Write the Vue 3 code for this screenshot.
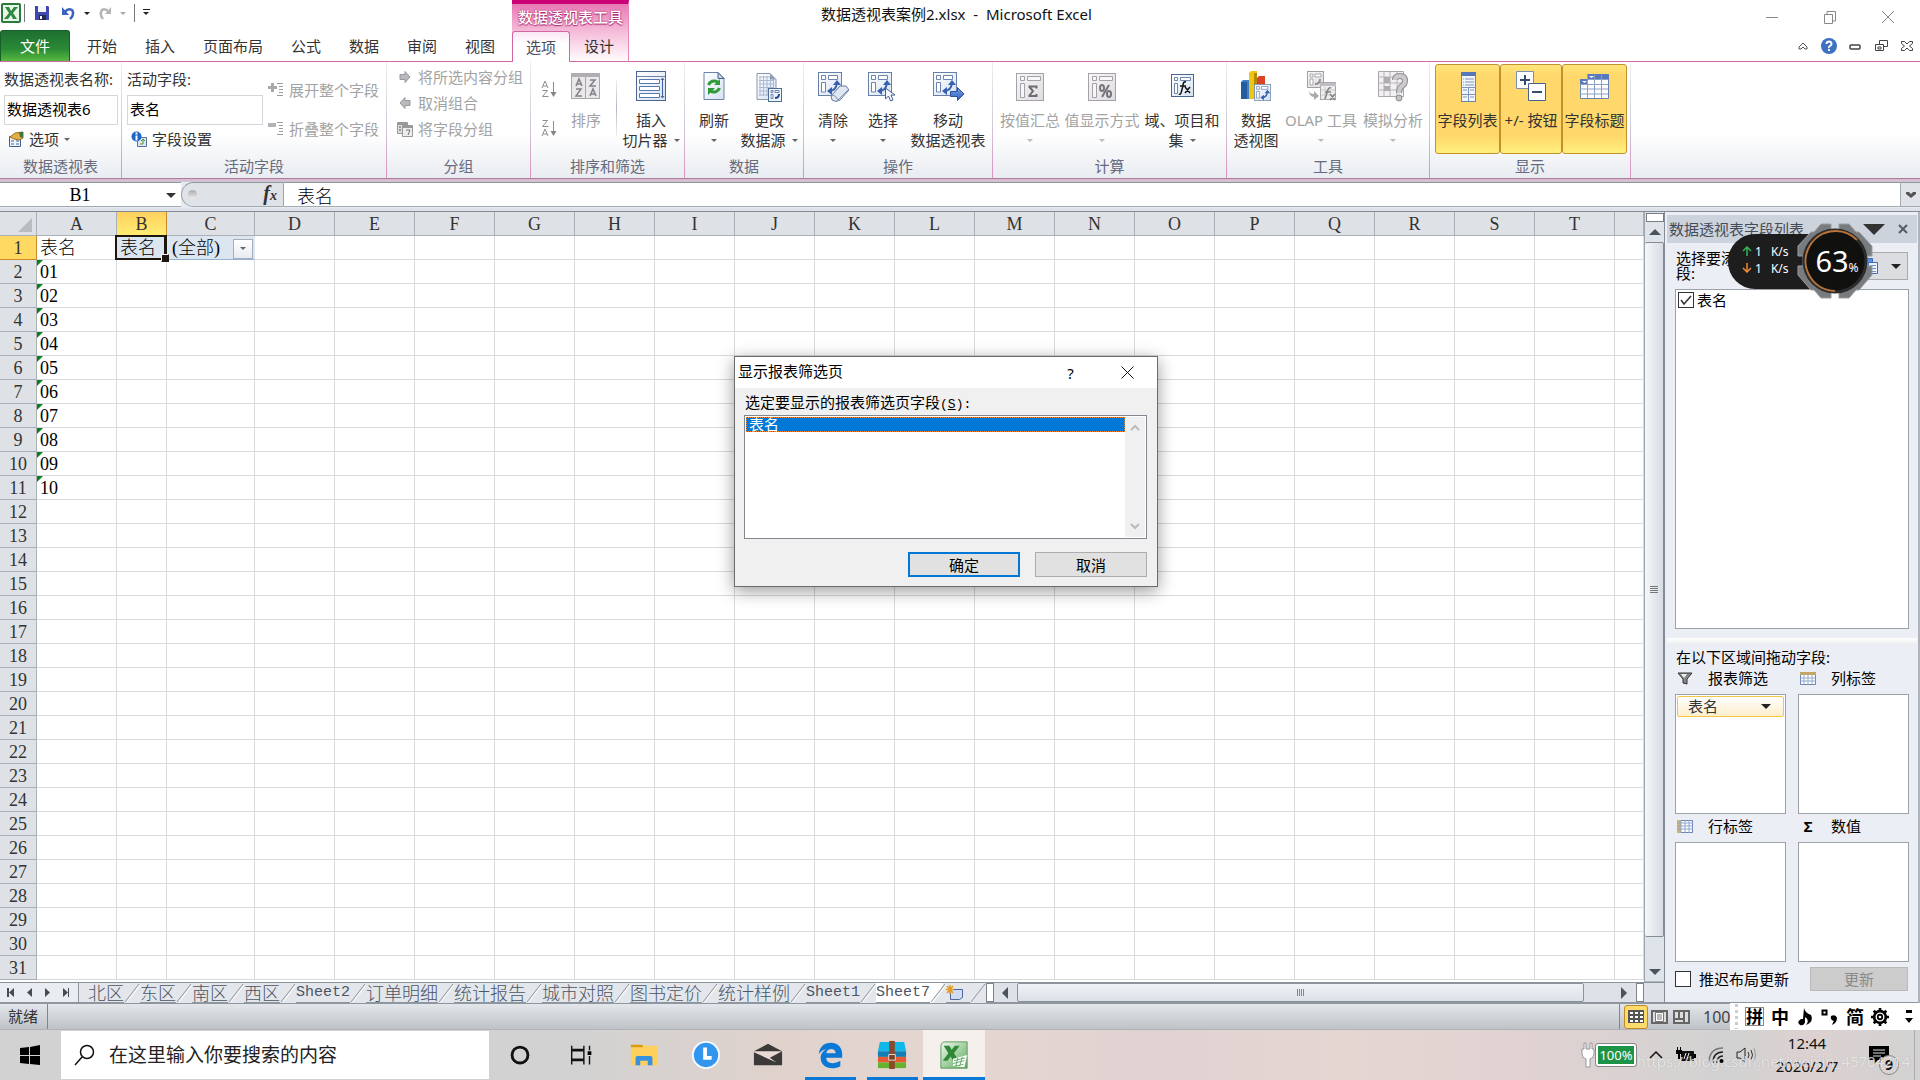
<script setup>
import { ref } from 'vue'

const tabs = ['开始', '插入', '页面布局', '公式', '数据', '审阅', '视图']

const bigGroups = [
  {
    name: '数据', width: 119, pad: 3,
    items: [
      { w: 52, icon: 'refresh', l1: '刷新', l2: '', arrow: true },
      { w: 58, icon: 'source', l1: '更改', l2: '数据源', arrow: true }
    ]
  },
  {
    name: '操作', width: 189, pad: 4,
    items: [
      { w: 50, icon: 'clear', l1: '清除', l2: '', arrow: true },
      { w: 50, icon: 'select', l1: '选择', l2: '', arrow: true },
      { w: 80, icon: 'move', l1: '移动', l2: '数据透视表', arrow: false }
    ]
  },
  {
    name: '计算', width: 234, pad: 3,
    items: [
      { w: 68, icon: 'sum', l1: '按值汇总', l2: '', arrow: true, off: true },
      { w: 76, icon: 'percent', l1: '值显示方式', l2: '', arrow: true, off: true },
      { w: 84, icon: 'fxset', l1: '域、项目和', l2: '集', arrow: true }
    ]
  },
  {
    name: '工具', width: 203, pad: 3,
    items: [
      { w: 52, icon: 'chart', l1: '数据', l2: '透视图', arrow: false },
      { w: 78, icon: 'olap', l1: 'OLAP 工具', l2: '', arrow: true, off: true },
      { w: 66, icon: 'whatif', l1: '模拟分析', l2: '', arrow: true, off: true }
    ]
  },
  {
    name: '显示', width: 201, pad: 5,
    items: [
      { w: 65, icon: 'fieldlist', l1: '字段列表', l2: '', on: true },
      { w: 62, icon: 'plusminus', l1: '+/- 按钮', l2: '', on: true },
      { w: 65, icon: 'headers', l1: '字段标题', l2: '', on: true }
    ]
  }
]

const cols = 'ABCDEFGHIJKLMNOPQRST'.split('')
const colWidth = { A: 80, B: 50, C: 88 }
const rows = Array.from({ length: 31 }, (_, i) => i + 1)
const cellA = (r) => (r === 1 ? '表名' : r <= 11 ? String(r - 1).padStart(2, '0') : '')

const sheets = ['北区', '东区', '南区', '西区', 'Sheet2', '订单明细', '统计报告', '城市对照', '图书定价', '统计样例', 'Sheet1', 'Sheet7']
const active = ref('Sheet7')

const apps = [
  { id: 'cortana', name: 'Cortana' },
  { id: 'taskview', name: '任务视图' },
  { id: 'folder', name: '文件资源管理器' },
  { id: 'clockapp', name: '时钟' },
  { id: 'mail', name: '邮件' },
  { id: 'edge', name: 'Edge', open: true },
  { id: 'rar', name: '压缩', open: true },
  { id: 'excelbig', name: 'Excel', open: true, current: true }
]

const pivotName = ref('数据透视表6')
const fieldName = ref('表名')
const cellRef = ref('B1')
const formula = ref('表名')
const search = ref('')
const picked = ref(true)
const defer = ref(false)
</script>

<template>
  <div class="page">
    <svg class="sprite" aria-hidden="true">
      <defs>
        <linearGradient id="gdoc" x1="0" y1="0" x2="1" y2="1"><stop offset="0" stop-color="#fff" /><stop offset="1" stop-color="#d5e2f2" /></linearGradient>
        <linearGradient id="ggrey" x1="0" y1="0" x2="1" y2="1"><stop offset="0" stop-color="#f8f7f9" /><stop offset="1" stop-color="#dedce0" /></linearGradient>
        <linearGradient id="gblue" x1="0" y1="0" x2="0" y2="1"><stop offset="0" stop-color="#7aa2ea" /><stop offset="1" stop-color="#2f5fbd" /></linearGradient>
        <linearGradient id="gx" x1="0" y1="0" x2="1" y2="1"><stop offset="0" stop-color="#f0f8ee" /><stop offset="1" stop-color="#5cab5b" /></linearGradient>
      </defs>
      <symbol id="pivot" viewBox="0 0 24 24">
        <rect x=".5" y=".5" width="23" height="23" fill="url(#gdoc)" stroke="#6780a8" />
        <path d="M3.5 3.5h4v4h-4zM10.500 3.500h9v4h-9zM3.500 10.500h4v9.500h-4z" fill="#fff" stroke="#6d84b0" />
        <path d="M11 19q7 0 8-8" fill="none" stroke="#355fb0" stroke-width="2" />
        <path d="M9 19l5-4v8zM19 8l-4 5h8z" fill="#355fb0" />
      </symbol>
      <symbol id="refresh" viewBox="0 0 32 32">
        <path d="M6 2.500h14l6 6v21H6z" fill="url(#gdoc)" stroke="#6a83a6" /><path d="M20 2.500v6h6z" fill="#c8d6ea" stroke="#4a6490" />
        <path d="M10.500 15a6 6 0 0 1 9-3M21.500 18a6 6 0 0 1-9 3" fill="none" stroke="#2f9a38" stroke-width="3" /><path d="M22 9v6h-6zM10 25v-7h7z" fill="#2f9a38" />
      </symbol>
      <symbol id="source" viewBox="0 0 32 32">
        <path d="M4 3.500h13l6 6v20H4z" fill="url(#gdoc)" stroke="#8797b0" /><path d="M7 6v20M10.500 6v20M14 6v20M17.500 9v17M20.500 9v17M6 7h11M6 10.500h15M6 14h15M6 17.500h15M6 21h15M6 25h15" stroke="#a9b9d0" />
        <path d="M17 3.500v6h6z" fill="#8d9db6" /><rect x="15.500" y="18.500" width="13" height="13" fill="#eef4fb" stroke="#4f6c94" /><path d="M18 20.500h2v2h-2zM22 20.500h4v2h-4zM18 24.500h2v4h-2z" fill="#fff" stroke="#6d84b0" /><path d="M22 28q4 0 4-4" fill="none" stroke="#224f94" stroke-width="2" />
      </symbol>
      <symbol id="clear" viewBox="0 0 32 32">
        <use href="#pivot" x="1" y="2" width="24" height="24" /><path d="M14 26l9-10 6 0 3 4-9 10q-4 3-8 0z" fill="#dfe7f3" stroke="#66799a" /><path d="M15 25q4 0 6 5l10-10" fill="none" stroke="#8191ae" />
      </symbol>
      <symbol id="select" viewBox="0 0 32 32">
        <use href="#pivot" x="1" y="2" width="24" height="24" /><path d="M18.500 18v11l3-3 2 5 2.500-1-2-5h4z" fill="#f5f9ff" stroke="#45618c" />
      </symbol>
      <symbol id="move" viewBox="0 0 32 32">
        <use href="#pivot" x="1" y="2" width="24" height="24" /><path d="M18.500 21.500h7v-4l6.500 6.500-6.500 6.500v-4h-7z" fill="url(#gblue)" stroke="#2c529c" />
      </symbol>
      <symbol id="greybox" viewBox="0 0 32 32">
        <rect x="2.500" y="3.500" width="27" height="27" fill="url(#ggrey)" stroke="#a5a1a7" /><path d="M6.500 6.500h4v4h-4zM13.500 6.500h13v4h-13zM6.500 13.500h4v14h-4z" fill="#f7f6f8" stroke="#a5a1a7" />
      </symbol>
      <symbol id="sum" viewBox="0 0 32 32"><use href="#greybox" /><path d="M14.500 16.500h8v2M15 16.500l4 4.500-4 5M14.500 26h8v-2" fill="none" stroke="#6f6b72" stroke-width="2" /></symbol>
      <symbol id="percent" viewBox="0 0 32 32"><use href="#greybox" /><g fill="none" stroke="#77737a" stroke-width="2"><ellipse cx="16" cy="18" rx="2" ry="3" /><ellipse cx="23" cy="24" rx="2" ry="3" /><path d="M23 15l-7 12" /></g></symbol>
      <symbol id="fxset" viewBox="0 0 32 32"><rect x="5.500" y="4.500" width="22" height="22" fill="url(#gdoc)" stroke="#48658e" /><path d="M8.500 7.500h3v3h-3zM14.500 7.500h10v3h-10zM8.500 13.500h3v10h-3z" fill="#fff" stroke="#6d84b0" /><path d="M20 12q-3-1-3 4l-2 7q-1 2-2 1M14 16h6M19 17l5 6M24 17l-5 6" fill="none" stroke="#111" stroke-width="1.500" /></symbol>
      <symbol id="chart" viewBox="0 0 32 32">
        <path d="M1 12l2-2h6v19H1z" fill="#3d80c5" /><path d="M1 12h6v17H1z" fill="#235d9e" /><path d="M9 3l2-2h6v28H9z" fill="#f0c614" /><path d="M14 3h3v26h-3z" fill="#b48a08" /><path d="M17 8l2-2h6v9h-8z" fill="#d94425" />
        <use href="#pivot" x="14" y="14" width="17" height="17" />
      </symbol>
      <symbol id="olap" viewBox="0 0 32 32"><rect x="2.500" y="1.500" width="16" height="16" fill="url(#ggrey)" stroke="#a29ea4" /><path d="M5 4h3v3H5zM10 4h6v3h-6zM5 9h3v6H5z" fill="#fff" stroke="#aaa6ac" /><path d="M10 14q5 0 5-5" fill="none" stroke="#929095" stroke-width="2" /><path d="M4 20q0 4 5 4v-3l5 5-5 4v-3q-5 0-5-7" fill="#aaa" /><rect x="15.500" y="12.500" width="15" height="17" fill="#eeedef" stroke="#aaa6ac" /><path d="M15 13h16v3H15z" fill="#c0bec4" /><path d="M16 20h14M16 25h14M20 17v12" stroke="#ccc" /><path d="M26 18q-3-1-4 5l-2 6M20 22h6M25 24l5 6M30 24l-5 6" fill="none" stroke="#858288" stroke-width="1.500" /></symbol>
      <symbol id="whatif" viewBox="0 0 32 32"><path d="M1.500 1.500h25v25h-25z" fill="#f1f0f2" stroke="#aaa6ac" /><path d="M1.500 7h25M1.500 13h25M1.500 20h25M7 1.500v25M13 1.500v25M20 1.500v25" stroke="#b8b4bb" /><path d="M7 7h6v6H7zM7 16h6v5H7z" fill="#aeabb1" /><path d="M18 10q0-4 5-4t5 5q0 3-3 5t-3 7" fill="none" stroke="#8e8b91" stroke-width="6" /><path d="M18 10q0-4 5-4t5 5q0 3-3 5t-3 7" fill="none" stroke="#cccacd" stroke-width="4" /><circle cx="22" cy="28" r="3" fill="#c4c2c6" stroke="#8e8b91" /></symbol>
      <symbol id="slicer" viewBox="0 0 32 32"><rect x="1.500" y="1.500" width="29" height="29" fill="url(#gdoc)" stroke="#4b6791" /><path d="M2 6.500h28" stroke="#6d84a8" /><path d="M4.500 9.500h20v4h-20zM4.500 16.500h20v4h-20zM4.500 23.500h20v4h-20z" fill="#fff" stroke="#5a78b0" /><path d="M27.500 9v18M26 10l1.500-2 1.500 2M26 26l1.500 2 1.500-2" fill="none" stroke="#40629e" /></symbol>
      <symbol id="fieldlist" viewBox="0 0 32 32"><rect x="9.500" y="2.500" width="14" height="29" fill="#f2f6fc" stroke="#6a83ad" /><path d="M9 2h15v4H9z" fill="#5677b8" /><path d="M11 9h1M11 12h1M11 15h1M13 9h9M13 12h9M13 15h9M9 17.500h15M9 24.500h15M16.500 18v13M11 20h4M18 20h4M11 27h4M18 27h4" stroke="#7d93bd" /></symbol>
      <symbol id="plusminus" viewBox="0 0 32 32"><g fill="#fcfdff" stroke="#7890b4"><path d="M1.500 1.500h17v17h-17z" /><path d="M13.500 13.500h17v17h-17z" stroke="#48628a" /></g><path d="M5 10h10M10 5v10M17 22h10" stroke="#394c6b" stroke-width="2" /></symbol>
      <symbol id="headers" viewBox="0 0 32 32"><path d="M1.500 9.500h7v-5h21v24h-28z" fill="#fff" stroke="#6b84b2" /><path d="M9 4h21v5H9zM1 9h8v5H1z" fill="#5879be" /><path d="M1 14.500h28M1 19h28M1 24h28M9 9.500h20M8.500 5v23M15.500 5v23M22.500 5v23" stroke="#8ba0c5" /><path d="M10 6h5l-2.500 2zM3 11h5l-2.500 2z" fill="#fff" /></symbol>
      <symbol id="sortbig" viewBox="0 0 32 32"><rect x="1.500" y="3.500" width="28" height="25" fill="#eae8eb" stroke="#aaa6ac" /><path d="M1 3h29v4H1z" fill="#b0adb3" /><path d="M15.500 7v21" stroke="#aaa6ac" /><g fill="none" stroke="#858188" stroke-width="1.500"><path d="M6 16l3-7 3 7M7 14h4M6 19h5l-5 7h6M20 10h5l-5 6h6M20 26l3-7 3 7M21 24h4" /></g></symbol>
      <symbol id="az" viewBox="0 0 16 18"><g fill="none" stroke="#8f8c91"><path d="M1 8l3-7 3 7M2 6h4M1.500 10.500h5L1.500 16.500h6" /><path d="M12.500 2v14" /></g><path d="M9.500 12h6l-3 5z" fill="#85828a" /></symbol>
      <symbol id="za" viewBox="0 0 16 18"><g fill="none" stroke="#8f8c91"><path d="M1.500 1.500h5L1.500 7.500h6M1 17l3-7 3 7M2 15h4" /><path d="M12.500 2v14" /></g><path d="M9.500 12h6l-3 5z" fill="#85828a" /></symbol>
      <symbol id="expand" viewBox="0 0 16 16"><path d="M0 4h3V1h3v3h3v3H6v3H3V7H0z" fill="#aaa7ad" /><path d="M9 1.500h6M11 4.500h4M11 7.500h4M11 10.500h4M9 13.500h6" stroke="#9d9aa0" /></symbol>
      <symbol id="collapse" viewBox="0 0 16 16"><path d="M0 2h8v4H0z" fill="#b5b2b8" /><path d="M9 1.500h6M11 4.500h4M11 7.500h4M11 10.500h4M9 13.500h6" stroke="#9d9aa0" /></symbol>
      <symbol id="right" viewBox="0 0 16 16"><path d="M3 5.500h5v-3l5 5.500-5 5.500v-3H3z" fill="#bbb8be" stroke="#98959b" /></symbol>
      <symbol id="left" viewBox="0 0 16 16"><path d="M13 5.500H8v-3L3 8l5 5.500v-3h5z" fill="#bbb8be" stroke="#98959b" /></symbol>
      <symbol id="cal" viewBox="0 0 16 16"><path d="M.5 1.500h10v11H.5z" fill="#ddd" stroke="#999" /><path d="M5.500 4.500h10v11h-10z" fill="#eee" stroke="#999" /><path d="M1 3h9M2 6h2M2 9h2M5 6h10" stroke="#999" stroke-width="2" /><path d="M9 9h4l-2 5" fill="none" stroke="#777" /></symbol>
      <symbol id="props" viewBox="0 0 16 16"><path d="M1.500 5.500h11v10h-11z" fill="#eef3fb" stroke="#44608f" /><path d="M3 10h3M3 13h3M8 10h3M8 13h3" stroke="#4667a5" /><path d="M2 6l5-4 8-1v6l-4 2-5-1z" fill="#e3ae45" stroke="#9a6c23" /><path d="M11 1h4v6l-3-1z" fill="#3c7a3c" /></symbol>
      <symbol id="fieldset" viewBox="0 0 16 16"><path d="M6.500 6.500h9v9h-9z" fill="#dce8f7" stroke="#55719f" /><circle cx="5.500" cy="5.500" r="5" fill="#1e66c5" /><path d="M5.500 4.500v5M5.500 1.500v2" stroke="#fff" stroke-width="2" /><path d="M9 13h3v-4M10 10l2-2 2 2" fill="none" stroke="#5b8c29" /></symbol>
      <symbol id="xl" viewBox="0 0 20 20"><rect x="1" y="1" width="18" height="18" rx="1" fill="#eaf5e9" stroke="#297b3b" stroke-width="2" /><path d="M4 4h4l2 4 3-4h4l-5 6 4 6h-4l-2-4-3 4H3l5-6z" fill="#2d8a3f" /></symbol>
      <symbol id="cortana" viewBox="0 0 32 32"><circle cx="16" cy="16" r="8.500" fill="none" stroke="#111" stroke-width="3" /></symbol>
      <symbol id="taskview" viewBox="0 0 32 32"><path d="M5 6v4h13V6M5 26v-4h13v4M5 11.500h13v9H5zM24 6v5M24 17v9" fill="none" stroke="#111" stroke-width="1.500" /><path d="M22 12h4v4h-4z" /></symbol>
      <symbol id="folder" viewBox="0 0 32 32"><path d="M2 5h12l2 3H2z" fill="#dd9a07" /><path d="M2 8h12l2-2h14v21H2z" fill="#ffd05c" /><path d="M7 27v-8q0-2 2-2h14q2 0 2 2v8h-5v-5h-8v5z" fill="#3791de" /></symbol>
      <symbol id="clockapp" viewBox="0 0 32 32"><circle cx="16" cy="16" r="14" fill="#3295ee" stroke="#f5f9ff" stroke-width="2" /><path d="M13 8h4v9h5v4h-9z" fill="#fff" /></symbol>
      <symbol id="mail" viewBox="0 0 32 32"><path d="M1 12L16 4l15 8v15H1z" fill="#3c3a38" /><path d="M1 12l30 0-13 7 7 5L1 13z" fill="#e8d9d4" /></symbol>
      <symbol id="edge" viewBox="0 0 32 32"><path d="M4 15C5 7 10 3 17 3c8 0 12 6 12 12v4H12c0 7 9 7 15 3v6c-10 5-21 1-21-9 0-5 4-9 8-10-5 1-8 3-10 6zm8-1h10c0-6-9-6-10 0z" fill="#0a78d6" /></symbol>
      <symbol id="rar" viewBox="0 0 32 32"><path d="M3 2h26l2 10H1z" fill="#10b8ea" /><path d="M1 12h30v6H1z" fill="#137db6" /><path d="M1 18h30v6H1z" fill="#e45a34" /><path d="M1 24h30v6H1z" fill="#65b32e" /><path d="M13 1h6v30h-6z" fill="#8a4a2c" /><path d="M12.500 15.500h7v6h-7z" fill="#764028" stroke="#f4dfce" /></symbol>
      <symbol id="excelbig" viewBox="0 0 32 32"><path d="M7 2h23v28H2V7q0-5 5-5z" fill="url(#gx)" stroke="#59965b" /><path d="M5 6h6l2.500 4.500L17 6h5l-6 8 5 8h-6l-2.500-4.500L9 22H4l6-8z" fill="#2f8835" /><path d="M15 20l15-4-3 13-12-1z" fill="#fff" /><path d="M16 22l12-3M15 25l12-3M16 28l10-2M20 19l-2 9M25 18l-3 10" stroke="#62a765" /></symbol>
      <symbol id="coltable" viewBox="0 0 16 13"><path d="M.5.5h15v12H.5z" fill="#fff" stroke="#6682b0" /><path d="M0 0h16v3H0z" fill="#c4a766" /><path d="M0 6h16M0 9h16M4 3v10M8 3v10M12 3v10" stroke="#8fa7cc" /></symbol>
      <symbol id="rowtable" viewBox="0 0 16 13"><path d="M.5.5h15v12H.5z" fill="#fff" stroke="#6682b0" /><path d="M0 0h4v13H0z" fill="#d0b36e" /><path d="M0 3h16M0 6h16M0 9h16M4 0v13M8 0v13M12 0v13" stroke="#8fa7cc" /></symbol>
    </svg>

    <header class="top">
      <div class="top-left">
        <div class="qat">
          <svg width="20" height="20"><use href="#xl" /></svg><i class="vline"></i>
          <button aria-label="保存" class="save"><svg width="14" height="14" viewBox="0 0 14 14"><path d="M0 0h13l1 1v13H0z" fill="#4048b0" /><path d="M3 0h8v6H3z" fill="#f3f5fc" /><path d="M4 9h7v5H4z" fill="#222850" /><path d="M5 10h2v3H5z" fill="#fff" /></svg></button>
          <button aria-label="撤消"><svg width="14" height="14" viewBox="0 0 14 14"><path d="M3 6q3-4 7-2 3 4-2 9" fill="none" stroke="#3c62c0" stroke-width="2.500" /><path d="M0 1v8h7z" fill="#3c62c0" /></svg></button><i class="tri"></i>
          <button aria-label="恢复"><svg width="14" height="14" viewBox="0 0 14 14"><path d="M11 6Q7 2 4 4q-3 4 1 9" fill="none" stroke="#b5b5b8" stroke-width="2.500" /><path d="M13 1v7H7z" fill="#b5b5b8" /></svg></button><i class="tri dim"></i>
          <i class="vline"></i><i class="tri more"></i>
        </div>
        <nav class="tabs"><button class="file">文件</button><button v-for="t in tabs" :key="t">{{ t }}</button></nav>
      </div>
      <div class="context">
        <div class="context-title">数据透视表工具</div>
        <div class="context-tabs"><button class="current">选项</button><button>设计</button></div>
      </div>
      <div class="top-right">
        <div class="title-row">
          <h1>数据透视表案例2.xlsx&nbsp; -&nbsp; Microsoft Excel</h1>
          <div class="win">
            <button aria-label="最小化"><svg width="14" height="14"><path d="M1 7.500h12" stroke="#888" /></svg></button>
            <button aria-label="还原"><svg width="14" height="14"><path d="M1.500 4.500h8v9h-8zM4 4V1.500h8.500V11H10" fill="none" stroke="#888" /></svg></button>
            <button aria-label="关闭"><svg width="14" height="14"><path d="M1 1l12 12M13 1L1 13" stroke="#888" /></svg></button>
          </div>
        </div>
        <div class="help-row">
          <button aria-label="折叠"><svg width="10" height="10"><path d="M1 6l4-4 4 4v2H7L5 6 3 8H1z" fill="#fff" stroke="#555" /></svg></button>
          <button aria-label="帮助"><svg width="16" height="16"><circle cx="8" cy="8" r="8" fill="#3e70c4" /><path d="M5.500 6q0-2.500 2.500-2.500T10.500 6q0 1-1.500 2t-1 2M8 11v2" fill="none" stroke="#fff" stroke-width="2" /></svg></button>
          <button aria-label="最小化窗口"><svg width="12" height="8"><rect x="1" y="3" width="10" height="4" rx="1" fill="#fff" stroke="#444" stroke-width="1.500" /></svg></button>
          <button aria-label="还原窗口"><svg width="13" height="12"><path d="M4.500 4V.5h8v6H9M.5 4.500h8v6h-8zM3 7h3v2H3z" fill="none" stroke="#444" /></svg></button>
          <button aria-label="关闭窗口"><svg width="12" height="10"><path d="M.5.5h3L6 3 8.500.5h3v2L8.500 5l3 2.500v2h-3L6 7 3.500 9.500h-3v-2L3.500 5l-3-2.500z" fill="#fff" stroke="#444" /></svg></button>
        </div>
      </div>
    </header>

    <section class="ribbon">
      <div class="group g-name">
        <div class="body">
          <label for="pname">数据透视表名称:</label>
          <input id="pname" v-model="pivotName">
          <button class="small"><svg width="16" height="16"><use href="#props" /></svg>选项<i class="tri sm"></i></button>
        </div>
        <div class="caption">数据透视表</div>
      </div>
      <div class="group g-field">
        <div class="body split">
          <div class="col">
            <label for="fname">活动字段:</label>
            <input id="fname" v-model="fieldName">
            <button class="small"><svg width="16" height="16"><use href="#fieldset" /></svg>字段设置</button>
          </div>
          <div class="col wide">
            <button class="small off" disabled><svg width="16" height="16"><use href="#expand" /></svg>展开整个字段</button>
            <button class="small off" disabled><svg width="16" height="16"><use href="#collapse" /></svg>折叠整个字段</button>
          </div>
        </div>
        <div class="caption">活动字段</div>
      </div>
      <div class="group g-group">
        <div class="body">
          <button class="small off" disabled><svg width="16" height="16"><use href="#right" /></svg>将所选内容分组</button>
          <button class="small off" disabled><svg width="16" height="16"><use href="#left" /></svg>取消组合</button>
          <button class="small off" disabled><svg width="16" height="16"><use href="#cal" /></svg>将字段分组</button>
        </div>
        <div class="caption">分组</div>
      </div>
      <div class="group g-sort">
        <div class="body bigs">
          <div class="azcol">
            <button aria-label="升序" disabled><svg width="16" height="18"><use href="#az" /></svg></button>
            <button aria-label="降序" disabled><svg width="16" height="18"><use href="#za" /></svg></button>
          </div>
          <button class="big off sortbtn" disabled><svg width="32" height="32"><use href="#sortbig" /></svg><span>排序</span></button>
          <i class="sep"></i>
          <button class="big slicerbtn"><svg width="32" height="32"><use href="#slicer" /></svg><span>插入</span><span>切片器<i class="tri sm"></i></span></button>
        </div>
        <div class="caption">排序和筛选</div>
      </div>
      <div v-for="g in bigGroups" :key="g.name" class="group" :style="{ width: g.width + 'px' }">
        <div class="body bigs" :style="{ paddingLeft: g.pad + 'px' }">
          <button v-for="b in g.items" :key="b.l1" class="big" :class="{ off: b.off, on: b.on }" :disabled="b.off" :style="{ width: b.w + 'px' }">
            <svg width="32" height="32"><use :href="'#' + b.icon" /></svg>
            <span>{{ b.l1 }}</span>
            <span>{{ b.l2 }}<i v-if="b.arrow" class="tri sm" :class="{ solo: !b.l2 }"></i></span>
          </button>
        </div>
        <div class="caption">{{ g.name }}</div>
      </div>
    </section>

    <div class="formula">
      <input v-model="cellRef" class="namebox" aria-label="名称框"><i class="tri"></i>
      <div class="fxpill"><i class="knob"></i><b><i>f</i><small>x</small></b></div>
      <input v-model="formula" class="fbox" aria-label="编辑栏">
      <button class="fexp" aria-label="展开编辑栏"><svg width="10" height="8"><path d="M0 1h3l2 2 2-2h3v2L5 7 0 3z" fill="#555" /></svg></button>
    </div>

    <main class="work">
      <div class="book">
        <div class="gridrow">
          <div class="sheet">
            <table>
              <colgroup><col class="c-head"><col v-for="c in cols" :key="c" :style="{ width: (colWidth[c] || 80) + 'px' }"><col class="c-rest"></colgroup>
              <thead><tr><th class="corner"></th><th v-for="c in cols" :key="c" :class="{ hot: c === 'B' }">{{ c }}</th><th></th></tr></thead>
              <tbody>
                <tr v-for="r in rows" :key="r">
                  <th :class="{ hot: r === 1 }">{{ r }}</th>
                  <td v-for="c in cols" :key="c" :class="{ flag: c === 'A' && r > 1 && r < 12, picked: c === 'B' && r === 1, pv: (c === 'B' || c === 'C') && r === 1 }">
                    <template v-if="c === 'A'">{{ cellA(r) }}</template>
                    <template v-else-if="c === 'B' && r === 1">表名</template>
                    <div v-else-if="c === 'C' && r === 1" class="pvfilter">(全部)<button aria-label="筛选"><i class="tri sm"></i></button></div>
                  </td>
                  <td></td>
                </tr>
              </tbody>
            </table>
          </div>
          <div class="vscroll">
            <i class="splitbox"></i><i class="arr up"></i><div class="thumb"><i></i></div><i class="arr down"></i>
          </div>
        </div>
        <div class="sheetbar">
          <div class="navs">
            <svg width="62" height="10"><g fill="#444c57"><path d="M0 0h2v9H0zM7 0v9L2 4.500zM25 0v9l-5-4.500zM38 0v9l5-4.500zM56 0v9l5-4.500zM61 0h1v9h-1z" /></g></svg><i></i>
          </div>
          <template v-for="s in sheets" :key="s">
            <button class="stab" :class="{ active: s === active, latin: s.startsWith('Sheet') }" @click="active = s">{{ s }}</button>
            <svg class="slash" width="16" height="20" viewBox="0 0 16 20"><path d="M1 19L15 1" stroke="#8e959d" /><path d="M3 19L16 2" stroke="#fff" /></svg>
          </template>
          <button class="newtab" aria-label="插入工作表"><svg width="18" height="16"><path d="M4.500 4.500h12v8l-3 2h-9z" fill="#cfdcf1" stroke="#4f689c" /><path d="M4 0v9M0 4.500h8M1 1l6 7M7 1L1 8" stroke="#e79b24" stroke-width="1.500" /></svg></button>
          <svg class="slash" width="16" height="20"><path d="M1 19L15 1" stroke="#8e959d" /></svg>
          <i class="hbox"></i>
          <div class="hscroll"><i class="arr l"></i><div class="hthumb"><i></i></div><i class="arr r"></i></div>
          <i class="hbox"></i><i class="corner2"></i>
        </div>
      </div>

      <aside class="panel">
        <div class="phead"><span>数据透视表字段列表</span><i class="bigtri"></i><button aria-label="关闭窗格"><svg width="10" height="10"><path d="M1 1l8 8M9 1L1 9" stroke="#555c66" stroke-width="2" /></svg></button></div>
        <div class="pchoose"><p>选择要添加到报表的字段:</p><button aria-label="布局"><svg width="16" height="18"><path d="M1.500 1.500h8v11h-8z" fill="#5d8ed8" stroke="#3b6cc0" /><path d="M5.500 5.500h9v11h-9z" fill="#eef4fd" stroke="#3b6cc0" /><path d="M7 8.500h6M7 11.500h6M7 14.500h6" stroke="#6c93d0" /></svg><i class="tri"></i></button></div>
        <div class="flist"><label><input v-model="picked" type="checkbox">表名</label></div>
        <div class="psplit"></div>
        <p class="drag">在以下区域间拖动字段:</p>
        <div class="areas">
          <div class="area"><h3><svg width="16" height="13"><path d="M1 1h14l-5 6v5l-4-1V7z" fill="#888" stroke="#333" /><path d="M4 2h6L7 6z" fill="#eee" /></svg>报表筛选</h3><div class="box"><button class="pill">表名<i class="tri"></i></button></div></div>
          <div class="area"><h3><svg width="16" height="13"><use href="#coltable" /></svg>列标签</h3><div class="box"></div></div>
          <div class="area"><h3><svg width="16" height="13"><use href="#rowtable" /></svg>行标签</h3><div class="box"></div></div>
          <div class="area"><h3><span class="sigma">Σ</span>数值</h3><div class="box"></div></div>
        </div>
        <div class="pfoot"><label><input v-model="defer" type="checkbox">推迟布局更新</label><button disabled>更新</button></div>
      </aside>
    </main>

    <div class="status">
      <span class="ready">就绪</span>
      <div class="views">
        <button class="von" aria-label="普通"><svg width="16" height="13"><path d="M0 0h16v13H0z" fill="#555" /><path d="M2 2h3v2H2zM7 2h3v2H7zM12 2h3v2h-3zM2 6h3v2H2zM7 6h3v2H7zM12 6h3v2h-3zM2 10h3v2H2zM7 10h3v2H7zM12 10h3v2h-3z" fill="#fff" /></svg></button>
        <button aria-label="页面布局"><svg width="17" height="14"><path d="M1 1h15v12H1z" fill="#ddd" stroke="#666" stroke-width="2" /><path d="M4.500 2.500h8v9h-8zM6 5h5M6 7h5M6 9h5" fill="#fff" stroke="#777" /></svg></button>
        <button aria-label="分页预览"><svg width="17" height="14"><path d="M0 0h17v14H0z" fill="#666" /><path d="M2 2h3v6H2zM7 2h3v6H7zM12 2h3v10h-3zM2 10h8v2H2z" fill="#ddd" /></svg></button>
        <span>100</span>
      </div>
    </div>

    <footer class="taskbar">
      <button class="start" aria-label="开始菜单"><svg width="20" height="20"><path d="M0 3l9-1v8H0zM10 2l10-2v10H10zM0 11h9v8l-9-1zM10 11h10v9l-10-1z" /></svg></button>
      <label class="search"><svg width="22" height="22"><circle cx="13" cy="8" r="6.500" fill="none" stroke="#111" stroke-width="1.500" /><path d="M8 13l-7 8" stroke="#111" stroke-width="1.500" /></svg><input v-model="search" placeholder="在这里输入你要搜索的内容" aria-label="搜索"></label>
      <button v-for="a in apps" :key="a.id" class="app" :class="{ open: a.open, current: a.current }" :aria-label="a.name"><svg width="30" height="30"><use :href="'#' + a.id" /></svg></button>
      <div class="tray">
        <svg width="14" height="26" viewBox="0 0 14 26"><path d="M3 1h2v6h4V1h2v6h2v5q0 4-4 5v8H5v-8q-4-1-4-5V7h2z" fill="#fff" stroke="#999" stroke-width="1" /></svg>
        <span class="batt">100%</span>
        <button class="tbtn" aria-label="更多图标"><svg width="14" height="10"><path d="M1 8l6-6 6 6" fill="none" stroke="#111" stroke-width="1.500" /></svg></button>
        <button class="tbtn" aria-label="电源"><svg width="20" height="16"><path d="M5.500 4.500h12v9h-12z" fill="#111" stroke="#111" /><path d="M18 7h2v4h-2zM0 3h6v4H4v5H2V7H0zM1 0h1v3H1zM4 0h1v3H4z" /><path d="M8 12l2-6M11 12l2-6" stroke="#eee" /></svg></button>
        <button class="tbtn" aria-label="网络"><svg width="18" height="18"><g fill="none" stroke="#222" stroke-width="1.500"><path d="M2 17Q2 2 16 2" stroke="#777" /><path d="M6 17q0-11 10-11M10 17q0-7 6-7" /></g><circle cx="14.500" cy="15" r="2" /></svg></button>
        <button class="tbtn" aria-label="音量"><svg width="20" height="18"><path d="M1 6h3l5-4v14l-5-4H1z" fill="none" stroke="#222" /><path d="M12 6q2 3 0 6M15 4q3 5 0 10" fill="none" stroke="#333" /><path d="M18 2q3 7 0 14" fill="none" stroke="#999" /></svg></button>
        <time><span>12:44</span><span>2020/2/7</span></time>
        <button class="notif" aria-label="通知"><svg width="20" height="18"><path d="M0 0h20v14H9l-4 4v-4H0z" /><path d="M4 4h12M4 7h12M4 10h8" stroke="#ddd" /></svg><b>9</b></button>
        <i class="desk"></i>
      </div>
    </footer>

    <section class="dialog" role="dialog" aria-labelledby="dlgtitle">
      <header><h2 id="dlgtitle">显示报表筛选页</h2><button aria-label="帮助"><span>?</span></button><button aria-label="关闭"><svg width="13" height="13"><path d="M.5.5l12 12M12.500.5l-12 12" stroke="#111" /></svg></button></header>
      <div id="dlglab" class="dlab">选定要显示的报表筛选页字段<span>(<u>S</u>):</span></div>
      <div class="dlist">
        <ul role="listbox" aria-labelledby="dlglab"><li role="option" aria-selected="true">表名</li></ul>
        <div class="dscroll"><svg width="10" height="7"><path d="M1 6l4-4 4 4" fill="none" stroke="#bbb" stroke-width="2" /></svg><svg width="10" height="7"><path d="M1 1l4 4 4-4" fill="none" stroke="#bbb" stroke-width="2" /></svg></div>
      </div>
      <div class="dbtns"><button class="ok">确定</button><button>取消</button></div>
    </section>

    <div class="speed">
      <div class="rates"><span><svg width="10" height="10"><path d="M5 10V1M1 5l4-4 4 4" fill="none" stroke="#35b558" stroke-width="1.500" /></svg>1<em>K/s</em></span><span><svg width="10" height="10"><path d="M5 0v9M1 5l4 4 4-4" fill="none" stroke="#f08a35" stroke-width="1.500" /></svg>1<em>K/s</em></span></div>
      <div class="dial">
        <svg width="76" height="76" viewBox="0 0 76 76"><path d="M24 1h10v8h8V1h10l7 8h3l13 14v10h-5v10h5v9L62 67h-3l-7 8H42v-8h-8v8H24l-7-8h-3L1 52v-9h5V33H1V23L14 9h3z" fill="#797c7e" stroke="#9b9ea0" /><circle cx="38" cy="38" r="31" fill="#10100f" stroke="#2c2c2c" stroke-width="3" /><path d="M60 17A30 30 0 1 0 38 68" fill="none" stroke="#b8743a" stroke-width="2" /></svg>
        <strong>63<small>%</small></strong>
      </div>
    </div>

    <div class="ime">
      <i class="dots"></i><span class="framed">拼</span><span>中</span>
      <svg width="18" height="20"><path d="M8 1q1 5 7 7 3 7-5 10 4-5-1-8v5q-1 4-5 3-4-3 1-6l2 0z" /></svg>
      <svg width="18" height="20"><rect x="1.500" y="3.500" width="4" height="4" fill="none" stroke="#000" stroke-width="2" /><path d="M10 9q5-2 6 2 0 5-5 7 1-3 2-4-4-1-3-5z" /></svg>
      <span>简</span>
      <svg width="18" height="20" viewBox="0 0 20 20"><circle cx="10" cy="10" r="6.500" fill="none" stroke="#000" stroke-width="3" /><circle cx="10" cy="10" r="2.500" fill="none" stroke="#000" stroke-width="2" /><path d="M10 0v4M10 16v4M0 10h4M16 10h4M3 3l3 3M14 14l3 3M17 3l-3 3M3 17l3-3" stroke="#000" stroke-width="3" /></svg>
      <svg class="tail" width="8" height="14"><path d="M1 0h6v3H1zM0 8h8l-4 5z" /></svg>
    </div>

    <div class="mark">https://blog.csdn.net/weixin_45704214</div>
  </div>
</template>

<style>
body { margin: 0; }
</style>

<style scoped>
* { box-sizing: border-box; }
.page { position: relative; min-height: 100vh; display: flex; flex-direction: column; overflow: hidden; background: #fff; color: #333; font: 15px/20px "Noto Sans", "Noto Sans CJK SC", sans-serif; }
.sprite { position: absolute; width: 0; height: 0; }
svg { display: block; flex: none; }
button { margin: 0; padding: 0; border: 0; background: none; color: inherit; font: inherit; white-space: nowrap; }
input { margin: 0; font: inherit; color: #000; border-radius: 0; outline: none; min-width: 0; }
h1, h2, h3, p, ul { margin: 0; padding: 0; font: inherit; list-style: none; }
.tri { display: inline-block; flex: none; border: 4px solid transparent; border-top: 4px solid #222; border-bottom: 0; }
.tri.sm { border-width: 3px 3px 0; border-top-color: #666; }
.tri.dim { border-width: 3px 3px 0; border-top-color: #aaa; }

/* title and tabs */
.top { display: flex; height: 62px; }
.top-left { flex: none; width: 512px; display: flex; flex-direction: column; }
.qat { height: 31px; display: flex; align-items: center; padding: 0 0 4px 1px; gap: 8px; }
.qat .vline { width: 1px; height: 18px; background: #777; margin-left: -5px; }
.qat .tri { border-width: 3px 3px 0; }
.qat .save { margin: 0 5px 0 2px; }
.qat .dim + .vline { margin-left: 0; }
.more { position: relative; }
.more::before { content: ""; position: absolute; left: -3px; top: -6px; width: 7px; height: 1px; background: #222; }
.tabs { flex: 1; display: flex; border-bottom: 1px solid #d268a1; }
.tabs button { padding: 0 14px; line-height: 30px; }
.tabs .file { width: 70px; margin-right: 3px; padding: 0; color: #fff; border: 1px solid #146026; border-bottom: 0; border-radius: 3px 3px 0 0; background: linear-gradient(#1e6f31, #2a8a35 60%, #58b83f); }
.context { flex: none; width: 117px; border-top: 4px solid #cb0077; border-right: 1px solid #e789bb; background: linear-gradient(#e879b4, #f6bfdb 50%, #fff); display: flex; flex-direction: column; }
.context-title { height: 27px; line-height: 26px; padding-left: 6px; color: #fff; white-space: nowrap; text-shadow: 0 0 2px #9c1463, 0 1px 1px #b03a7d; font-weight: 500; }
.context-tabs { flex: 1; display: flex; border-bottom: 1px solid #d268a1; }
.context-tabs button { flex: 1; line-height: 28px; }
.context-tabs .current { flex: none; width: 58px; margin-bottom: -1px; color: #4c4c5c; background: linear-gradient(#fae6f5, #fff 40%); border: 1px solid #d268a1; border-bottom: 0; border-radius: 3px 3px 0 0; }
.top-right { flex: 1; border-bottom: 1px solid #d268a1; }
.title-row { height: 33px; display: flex; padding: 0 3px 0 192px; }
h1 { color: #111; flex: 1; line-height: 29px; white-space: nowrap; }
.win, .help-row { display: flex; }
.win button { width: 58px; display: grid; place-items: center; }
.help-row { justify-content: flex-end; height: 25px; }
.help-row button { width: 26px; display: grid; place-items: center; }

/* ribbon */
.ribbon { display: flex; height: 120px; background: linear-gradient(#fff 60%, #e9ecf1 97%); border-bottom: 1px solid #c7c9d1; box-shadow: inset 0 -2px #dfb9d2, inset 0 -3px #a6809b; }
.group { flex: none; height: 116px; border-right: 1px solid; border-image: linear-gradient(#f0eef2, #cfcfda 50%, #dc8fbd) 1; display: flex; flex-direction: column; }
.g-name { width: 122px; } .g-field { width: 265px; } .g-group { width: 144px; } .g-sort { width: 154px; }
.body { height: 91px; display: flex; flex-direction: column; }
.caption { height: 25px; line-height: 26px; text-align: center; color: #666b7d; }
.group label { line-height: 26px; margin: 4px 0 3px; white-space: nowrap; }
.group input { height: 30px; border: 1px solid #d5d7dc; padding: 0 2px 3px; background: #fff; }
.g-name .body { padding: 0 3px 0 4px; }
.split { flex-direction: row; padding-left: 5px; }
.col { width: 136px; display: flex; flex-direction: column; }
.col .small { padding-left: 4px; }
.wide { width: auto; padding: 8px 0 0 5px; }
.wide .small { height: 39px; padding: 0; gap: 5px; }
.small { height: 28px; display: flex; align-items: center; gap: 5px; padding-left: 4px; }
.off { color: #a3a3a3; }
.g-group .body { padding: 2px 0 0 6px; }
.g-group .small { height: 26px; }
.bigs { flex-direction: row; }
.azcol { width: 30px; padding: 7px 0 0 10px; }
.azcol button { height: 39px; display: grid; place-items: center; }
.sep { width: 1px; height: 56px; margin: 18px 4px 0 5px; background: linear-gradient(#eee, #b4b8c4, #eee); }
.big { display: flex; flex-direction: column; align-items: center; height: 91px; padding-top: 8px; }
.big.off { color: #a3a3a3; }
.big svg { margin-bottom: 8px; }
.big span { height: 20px; line-height: 20px; }
.big span .tri { margin: 0 0 4px 6px; }
.big span .solo { margin-left: 0; }
.big.off .tri { border-top-color: #bbb; }
.sortbtn { width: 50px; } .slicerbtn { width: 60px; }
.big.on { height: 90px; margin-top: 2px; padding-top: 5px; border: 1px solid #c2912e; border-radius: 3px; background: linear-gradient(#ffe57a, #ffd86b 12%, #ffd76b 80%, #fff07c); }

/* formula bar */
.formula { display: flex; height: 30px; padding-bottom: 4px; background: #e6eaf1; border-bottom: 1px solid #858b92; align-items: stretch; box-shadow: inset 0 -3px #dde2ea; }
.formula > * { border-top: 1px solid #90959c; border-bottom: 1px solid #a5aab1; }
.formula > input { border-width: 1px 0; border-style: solid; border-color: #90959c #fff #a5aab1; background: #fff; font: 18px "Liberation Serif", "Noto Sans CJK SC", serif; font-weight: 300; }
.formula > .namebox { width: 166px; text-align: center; padding: 1px 6px 0 0; }
.formula > .tri { position: relative; width: 15px; border: 0; border-top: 1px solid #90959c; border-bottom: 1px solid #a5aab1; background: #fff; }
.formula > .tri::after { content: ""; position: absolute; left: 0; top: 10px; border: 5px solid transparent; border-top-color: #333; border-bottom: 0; }
.fxpill { width: 103px; display: flex; align-items: center; justify-content: space-between; padding: 0 6px; border-left: 1px solid #9da2a9; border-right: 1px solid #9da2a9; border-radius: 13px 0 0 13px; background: #dfe2e7; }
.knob { width: 9px; height: 9px; border-radius: 5px; background: linear-gradient(#aaa, #eee); }
.fxpill b { font: italic bold 20px/24px "Liberation Serif", serif; }
.fxpill small { font-size: 14px; }
.fbox { flex: 1; padding: 0 13px; }
.fexp { width: 20px; display: grid; place-items: center; border-left: 1px solid #a5aab1; background: #e0e3e8; }

/* workbook */
.work { flex: 1; display: flex; min-height: 0; }
.book { flex: 1; min-width: 0; display: flex; flex-direction: column; }
.gridrow { flex: 1; display: flex; min-height: 0; }
.sheet { flex: 1; min-width: 0; overflow: hidden; background: #fff; }
table { width: 100%; table-layout: fixed; border-spacing: 0; border-collapse: separate; font: 300 18px/21px "Liberation Serif", "Noto Sans CJK SC", serif; color: #000; }
.c-head { width: 37px; } .c-rest { width: auto; }
th { height: 24px; padding: 2px 0 0; font-weight: 300; color: #333; background: #dee2e7; border-right: 1px solid #a9b0b7; border-bottom: 1px solid #a9b0b7; }
td { position: relative; height: 24px; padding: 2px 0 0 3px; border-right: 1px solid #d8dadc; border-bottom: 1px solid #d8dadc; white-space: nowrap; }
thead th.hot, th.hot { background: linear-gradient(#ffd15f, #ffec72); border-color: #c88b2a; }
tbody th.hot { background: #ffd962; }
.corner { position: relative; }
.corner::after { content: ""; position: absolute; right: 4px; bottom: 3px; border: 7px solid; border-color: transparent #b9bdc2 #b9bdc2 transparent; }
.flag::before { content: ""; position: absolute; left: 0; top: 0; border: 3px solid; border-color: #0b7d1a transparent transparent #0b7d1a; }
.pv { background: #dce6f1; border-color: #dce6f1; border-bottom-color: #95b3d7; }
.pvfilter { display: flex; align-items: center; justify-content: space-between; height: 21px; padding-left: 2px; }
.pvfilter button { width: 20px; height: 20px; margin-right: 1px; display: grid; place-items: center; border: 1px solid #a8adb6; background: linear-gradient(#fff, #e8ebf1); }
.picked::before { content: ""; position: absolute; inset: -1px -1px -1px -2px; border: 2px solid #1c160c; border-right-width: 3px; z-index: 1; }
.picked::after { content: ""; position: absolute; right: -3px; bottom: -3px; width: 6px; height: 6px; background: #1c160c; border: 1px solid #fff; border-right-color: #1c160c; border-bottom-color: #1c160c; z-index: 2; }
.vscroll { width: 20px; display: flex; flex-direction: column; align-items: center; background: #dfe4eb; border-left: 1px solid #a0a6ad; border-bottom: 1px solid #b0b6bd; }
.splitbox { width: 18px; height: 9px; margin: 1px 0 6px; border: 1px solid #777d84; background: #fff; }
.arr { flex: none; border: 6px solid transparent; }
.arr.up { border-bottom-color: #4d535c; border-top: 0; margin: 1px 0 7px; }
.arr.down { border-top-color: #4d535c; border-bottom: 0; margin: 32px 0 6px; }
.thumb { flex: 1; align-self: stretch; border: 1px solid #858c96; border-left: 0; border-radius: 2px; background: linear-gradient(90deg, #f5f7fa, #d7dce4); display: grid; place-items: center; }
.thumb i { width: 8px; height: 8px; background: repeating-linear-gradient(#777 0 1px, transparent 1px 2px); }
.sheetbar { height: 22px; display: flex; align-items: stretch; background: #dee2e8; border-top: 1px solid #8d939a; border-bottom: 2px solid #8e96a0; font: 300 18px/18px "Noto Sans CJK SC", sans-serif; color: #4c5565; }
.navs { width: 79px; display: flex; align-items: center; padding-left: 7px; background: #e9edf2; }
.navs i { width: 1px; height: 19px; margin-left: 9px; background: #8e959d; }
.stab { height: 19px; line-height: 19px; background: #e3e7ec; }
.navs + .stab { padding-left: 9px; }
.stab.latin { font: 15px/18px "Liberation Mono", monospace; padding-top: 1px; }
.stab.active { background: #fff; }
.slash { background: #e3e7ec; }
.stab.active + .slash { background: linear-gradient(120deg, #fff 50%, #e3e7ec 50%); }
.newtab { width: 24px; display: grid; align-items: center; background: #e3e7ec; }
.hbox { width: 8px; border: 1px solid #7d838b; background: #fff; }
.hscroll { flex: 1; display: flex; align-items: center; }
.arr.l { border-width: 6px 6px 6px 0; border-right-color: #4d535c; margin: 0 9px 0 8px; }
.arr.r { border-width: 6px 0 6px 6px; border-left-color: #4d535c; margin: 0 9px 0 37px; }
.hthumb { flex: 1; align-self: stretch; border: 1px solid #8c939c; border-radius: 2px; background: linear-gradient(#f0f3f7, #dce1e8); display: grid; place-items: center; }
.hthumb i { width: 7px; height: 7px; background: repeating-linear-gradient(90deg, #888 0 1px, transparent 1px 2px); }
.corner2 { width: 20px; }

/* field panel */
.panel { width: 256px; display: flex; flex-direction: column; border-left: 1px solid #858c96; border-right: 2px solid #aeb4bd; border-bottom: 2px solid #8e96a0; background: #ebeef4; color: #000; }
.phead { height: 28px; margin: 3px 1px 0 2px; padding: 0 9px 0 2px; display: flex; align-items: center; background: #cdd3dc; color: #444c58; }
.phead span { flex: 1; }
.bigtri { border: 11px solid transparent; border-top-color: #333; border-bottom: 0; margin-right: 13px; }
.pchoose { display: flex; justify-content: space-between; align-items: center; height: 46px; padding: 0 10px 0 11px; }
.pchoose p { width: 150px; line-height: 15px; }
.pchoose button { width: 60px; height: 28px; display: flex; align-items: center; justify-content: flex-end; gap: 12px; padding-right: 6px; border: 1px solid #aaa; background: #dcdde0; }
.pchoose .tri { border-width: 5px 5px 0; }
.flist { flex: 1; margin: 0 9px 0 10px; border: 1px solid #9da1a8; background: #fff; padding: 2px; }
.panel label { display: flex; align-items: center; gap: 3px; line-height: 15px; white-space: nowrap; }
.panel input { appearance: none; width: 16px; height: 16px; border: 1px solid #333; background: #fff; }
.panel input:checked { background: #fff url("data:image/svg+xml,%3Csvg xmlns='http://www.w3.org/2000/svg' width='14' height='14'%3E%3Cpath d='M2 7l3 4 7-8' fill='none' stroke='%23333' stroke-width='1.500'/%3E%3C/svg%3E") center no-repeat; }
.psplit { height: 5px; margin: 9px 1px 0 2px; background: linear-gradient(#fff, #f1f3f0); }
.drag { height: 23px; line-height: 29px; padding-left: 11px; }
.areas { display: grid; grid-template-columns: 111px 111px; justify-content: space-between; padding: 0 9px 0 10px; }
.area h3 { height: 28px; line-height: 24px; display: flex; align-items: center; gap: 15px; padding: 0 0 4px 2px; }
.area h3 > :first-child { flex: none; width: 16px; }
.sigma { font-weight: bold; text-align: center; }
.box { height: 120px; border: 1px solid #9da1a8; background: #fff; padding: 1px; }
.pill { width: 100%; height: 21px; display: flex; align-items: center; justify-content: space-between; padding: 0 12px 1px 10px; border: 1px solid #f2c744; border-radius: 2px; background: linear-gradient(#fff, #fdeecb); color: #333; }
.pill .tri { border-width: 5px 5px 0; }
.pfoot { height: 40px; display: flex; align-items: center; justify-content: space-between; padding: 0 10px 6px; }
.pfoot label { gap: 8px; }
.pfoot button { width: 98px; height: 24px; border: 1px solid #b9b9b9; background: #ccc; color: #8a8a8a; line-height: 20px; }

/* status and task bars */
.status { height: 26px; display: flex; justify-content: space-between; background: linear-gradient(#e3e6ea, #bfc3c8); border-bottom: 1px solid #b0b4b9; }
.ready { width: 48px; padding-left: 8px; line-height: 24px; border-right: 1px solid #80868d; }
.views { width: 301px; display: flex; align-items: center; border-left: 1px solid #80868d; padding-left: 4px; color: #444; }
.views button { width: 22px; height: 24px; display: grid; place-items: center; }
.views .von { width: 24px; border: 1px solid #c08a25; border-radius: 3px; background: #ffdb6b; }
.views span { margin-left: 11px; font-size: 16px; }
.taskbar { height: 50px; display: flex; background: linear-gradient(90deg, #d2d2d2 0 30%, #dfd2cd 40%, #e6d6d1 50%, #e0d2d2 60%, #e5d6d2 70%, #e0d2d2 80%, #d2d2d2 90%, #dcd1d0 94%, #d3d2d2); }
.start { width: 61px; display: grid; place-items: center; padding-right: 1px; }
.search { width: 428px; margin: 1px 0; background: #fff; display: flex; align-items: center; padding-left: 13px; gap: 13px; }
.search input { flex: 1; border: 0; padding: 0; font-size: 19px; background: none; }
.search input::placeholder { color: #222; opacity: 1; }
.app { width: 62px; display: grid; place-items: center; }
.app.open { background: linear-gradient(#0a78d6, #0a78d6) center bottom / 51px 3px no-repeat; }
.app.current { background: linear-gradient(#0a78d6, #0a78d6) center bottom / 62px 3px no-repeat, #f5f0ec; }
.tray { margin-left: auto; display: flex; align-items: center; color: #111; }
.tray > svg { margin-right: 1px; }
.batt { width: 40px; height: 22px; margin-right: 5px; border: 2px solid #fff; outline: 1px solid #888; background: #1d9347; color: #fff; font: 13px/18px "Noto Sans", sans-serif; text-align: center; border-radius: 2px; }
.tbtn { width: 30px; display: grid; place-items: center; }
time { width: 86px; display: flex; flex-direction: column; align-items: center; line-height: 23px; font-size: 15px; margin-left: 3px; }
.notif { position: relative; width: 64px; height: 50px; padding: 0 0 0 19px; display: flex; align-items: center; }
.notif b { position: absolute; left: 29px; bottom: 5px; width: 20px; height: 20px; border: 1px solid #888; border-radius: 10px; background: #d8d4d4; font-size: 14px; line-height: 18px; }
.desk { width: 6px; align-self: stretch; border-left: 1px solid #aaa; }

/* floating windows */
.dialog { position: absolute; left: 734px; top: 356px; width: 424px; border: 1px solid #6c6c6c; background: #f0f0f0; color: #000; box-shadow: 0 4px 16px rgba(0, 0, 0, .4); padding-bottom: 9px; z-index: 5; }
.dialog header { height: 31px; display: flex; align-items: center; background: #fff; padding: 0 1px 0 3px; }
.dialog h2 { flex: 1; line-height: 28px; height: 31px; }
.dialog header button { width: 57px; height: 31px; display: grid; place-items: center; }
.dlab { height: 27px; line-height: 28px; padding-left: 10px; }
.dlab span { font: 13px "Liberation Mono", monospace; }
.dlist { height: 124px; margin: 0 10px 0 9px; border: 1px solid #828790; background: #fff; display: flex; padding: 1px; }
.dlist ul { flex: 1; }
.dlist li { height: 15px; line-height: 13px; padding-left: 2px; background: #0078d7; color: #fff; border: 1px dotted #ff8728; }
.dscroll { width: 20px; background: #f0f0f0; display: flex; flex-direction: column; justify-content: space-between; align-items: center; padding: 7px 0; }
.dbtns { display: flex; justify-content: flex-end; gap: 15px; margin: 13px 10px 0; }
.dbtns button { width: 112px; height: 25px; border: 1px solid #adadad; background: #e1e1e1; line-height: 22px; }
.dbtns .ok { border: 2px solid #0078d7; line-height: 20px; }
.speed { position: absolute; right: 47px; top: 223px; width: 145px; height: 76px; display: flex; align-items: center; z-index: 5; color: #fff; }
.rates { width: 95px; height: 55px; flex: none; border-radius: 27px 0 0 27px; background: #1d1d1e; padding: 9px 0 0 14px; font: 12px/17px "Noto Sans", sans-serif; }
.rates span { display: flex; align-items: center; gap: 3px; }
.rates em { font-style: normal; margin-left: 6px; }
.dial { position: relative; flex: none; width: 76px; margin-left: -26px; }
.dial strong { position: absolute; inset: 18px 0 0 4px; text-align: center; font: 29px/40px "Noto Sans", sans-serif; }
.dial small { font-size: 12px; }
.ime { position: absolute; right: 0; bottom: 50px; width: 190px; height: 27px; display: flex; align-items: center; gap: 7px; padding: 0 7px 0 5px; background: #fff; color: #000; font-size: 18px; font-weight: bold; z-index: 5; }
.ime .tail { margin-left: auto; }
.ime .dots { width: 3px; height: 25px; background: repeating-linear-gradient(#ccc 0 3px, transparent 3px 6px); }
.framed { border: 1px solid #888; line-height: 17px; font-size: 17px; }
.mark { position: absolute; right: 10px; bottom: 9px; font: 15px/20px "Noto Sans", sans-serif; color: rgba(255, 255, 255, .7); text-shadow: 0 0 1px rgba(120, 120, 120, .5); z-index: 6; pointer-events: none; }
</style>
